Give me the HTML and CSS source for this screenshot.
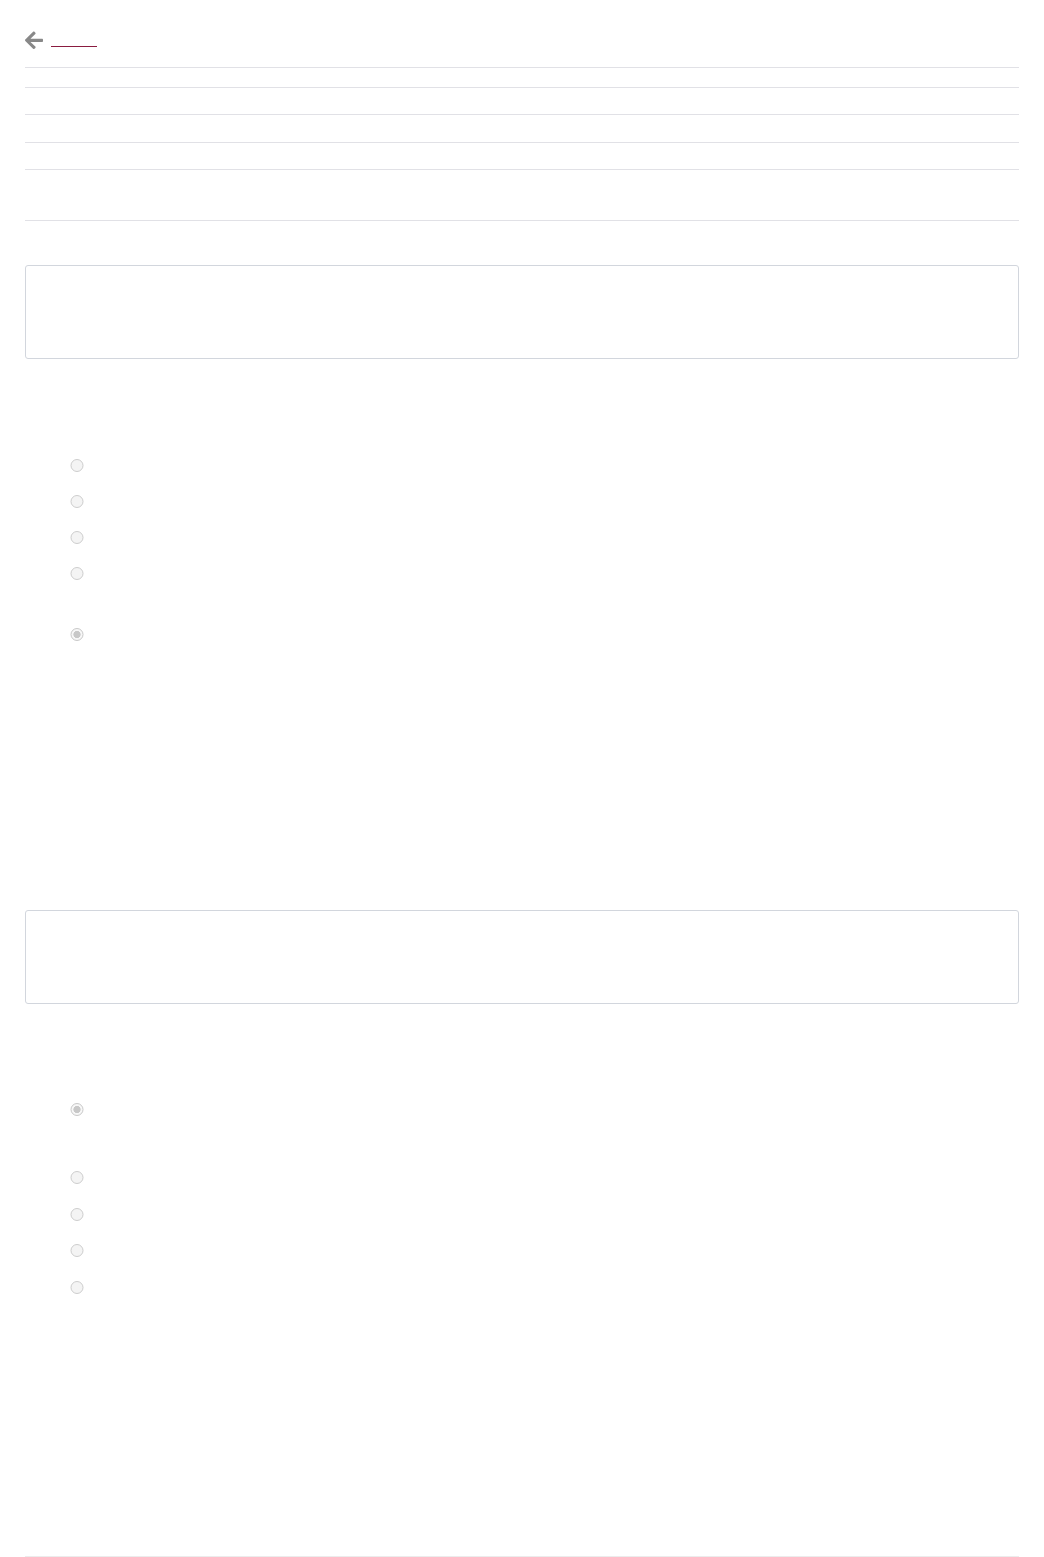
FILE: index.html
```html
<!DOCTYPE html>
<html lang="en">
<head>
<meta charset="utf-8">
<title>Quiz</title>
<link rel="stylesheet" href="styles.css">
</head>
<body>
<div class="page">
  <header class="topbar">
    <svg class="back-icon" viewBox="0 0 448 512" width="18" height="20.57" aria-hidden="true"><path fill="#888888" d="M257.5 445.1l-22.2 22.2c-9.4 9.4-24.6 9.4-33.9 0L7 273c-9.4-9.4-9.4-24.6 0-33.9L201.4 44.7c9.4-9.4 24.6-9.4 33.9 0l22.2 22.2c9.5 9.5 9.3 25-.4 34.3L136.6 216H424c13.3 0 24 10.7 24 24v32c0 13.3-10.7 24-24 24H136.6l120.5 114.8c9.8 9.3 10 24.8.4 34.3z"/></svg>
    <a class="back-link" href="#"></a>
  </header>
  <div class="info-table">
    <div class="info-row r1"></div>
    <div class="info-row r2"></div>
    <div class="info-row r3"></div>
    <div class="info-row r4"></div>
    <div class="info-row r5"></div>
  </div>

  <section class="question">
    <div class="question-box"></div>
    <div class="options">
      <label class="option"><input type="radio" name="q1" disabled></label>
      <label class="option"><input type="radio" name="q1" disabled></label>
      <label class="option"><input type="radio" name="q1" disabled></label>
      <label class="option tall-a"><input type="radio" name="q1" disabled></label>
      <label class="option"><input type="radio" name="q1" disabled checked></label>
    </div>
  </section>

  <section class="question second">
    <div class="question-box"></div>
    <div class="options">
      <label class="option tall-b"><input type="radio" name="q2" disabled checked></label>
      <label class="option wide"><input type="radio" name="q2" disabled></label>
      <label class="option wide"><input type="radio" name="q2" disabled></label>
      <label class="option wide"><input type="radio" name="q2" disabled></label>
      <label class="option wide"><input type="radio" name="q2" disabled></label>
    </div>
  </section>

  <footer class="footer"></footer>
</div>
</body>
</html>
```

FILE: styles.css
```css
html, body {
  margin: 0;
  padding: 0;
  background: #ffffff;
  font-family: "Open Sans", "Liberation Sans", sans-serif;
}

.page {
  margin: 0 25px;
}

.topbar {
  display: flex;
  align-items: flex-start;
  height: 68px;
  box-sizing: border-box;
  padding: 30px 0 0 0;
  border-bottom: 1px solid #e1e1e6;
}

.back-icon {
  display: block;
  flex: none;
}

.back-link {
  display: block;
  width: 46px;
  height: 16px;
  margin-left: 8px;
  border-bottom: 1px solid #8a1c40;
  text-decoration: none;
}

.info-row {
  border-bottom: 1px solid #e1e1e6;
}
.info-row.r1 { height: 19px; }
.info-row.r2 { height: 26px; }
.info-row.r3 { height: 27px; }
.info-row.r4 { height: 26px; }
.info-row.r5 { height: 50px; }

.question {
  margin-top: 44px;
}

.question.second {
  margin-top: 257px;
}

.question-box {
  height: 94px;
  box-sizing: border-box;
  border: 1px solid #d2d6dd;
  border-radius: 3px;
}

.options {
  margin-top: 89px;
  padding-left: 45px;
}

.second .options {
  margin-top: 88px;
}

.option {
  display: flex;
  align-items: flex-start;
  height: 36px;
  box-sizing: border-box;
  padding-top: 11px;
}

.option.wide { height: 36.5px; }
.option.tall-a { height: 61px; }
.option.tall-b { height: 68px; }

.option input {
  appearance: none;
  -webkit-appearance: none;
  margin: 0;
  width: 13px;
  height: 13px;
  box-sizing: border-box;
  border: 1px solid #cdcdcd;
  border-radius: 50%;
  background: #f4f4f4;
  transform: translateX(0.5px);
}

.option input:checked {
  background: radial-gradient(circle, #c8c8c8 0 3.3px, #f7f7f7 3.9px);
  border-color: #c8c8c8;
}

.footer {
  margin-top: 250px;
  height: 10px;
  border-top: 1px solid #ececec;
}
```
